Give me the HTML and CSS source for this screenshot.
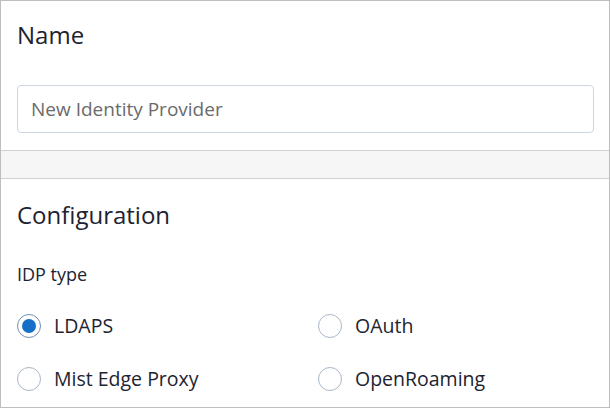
FILE: index.html
```html
<!DOCTYPE html>
<html>
<head>
<meta charset="utf-8">
<link rel="stylesheet" href="styles.css">
</head>
<body>
<div class="panel">
  <section class="sec sec-name">
    <h2 class="title">Name</h2>
    <input class="text-input" type="text" placeholder="New Identity Provider">
  </section>
  <div class="band"></div>
  <section class="sec sec-config">
    <h2 class="title">Configuration</h2>
    <div class="field-label">IDP type</div>
    <div class="radios">
      <label class="radio"><span class="dot checked"></span><span class="radio-text">LDAPS</span></label>
      <label class="radio"><span class="dot"></span><span class="radio-text">OAuth</span></label>
      <label class="radio"><span class="dot"></span><span class="radio-text">Mist Edge Proxy</span></label>
      <label class="radio"><span class="dot"></span><span class="radio-text">OpenRoaming</span></label>
    </div>
  </section>
</div>
</body>
</html>
```
FILE: styles.css
```css
* { box-sizing: border-box; }
html, body { margin: 0; padding: 0; background: #fff; }
body { font-family: "Open Sans", "Noto Sans", sans-serif; color: #1d2330; }
.panel {
  width: 610px;
  height: 408px;
  border: 1px solid #bdbdbd;
  overflow: hidden;
}
.sec { padding: 0 15px 0 16px; }
.sec-name { padding-top: 18px; padding-bottom: 17px; }
.title {
  margin: 0;
  font-size: 24px;
  line-height: 32px;
  font-weight: 400;
  color: #1d2330;
}
.text-input {
  display: block;
  width: 100%;
  height: 48px;
  margin-top: 34px;
  border: 1px solid #cdd6e2;
  border-radius: 4px;
  padding: 0 13px;
  font-family: inherit;
  font-size: 19px;
  color: #333;
  outline: none;
}
.text-input::placeholder { color: #6b6b6b; opacity: 1; }
.band {
  height: 29px;
  background: #f6f6f6;
  border-top: 1px solid #cfcfcf;
  border-bottom: 1px solid #cfcfcf;
}
.sec-config { padding-top: 20px; }
.field-label {
  margin-top: 32px;
  font-size: 18px;
  line-height: 22px;
  color: #1d2330;
}
.radios {
  margin-top: 29px;
  display: grid;
  grid-template-columns: 301px 1fr;
  row-gap: 29px;
}
.radio {
  display: flex;
  align-items: center;
  gap: 13px;
  height: 24px;
}
.dot {
  width: 24px;
  height: 24px;
  border-radius: 50%;
  border: 1px solid #a9b6c6;
  background: #fff;
  display: flex;
  align-items: center;
  justify-content: center;
  flex: none;
}
.dot.checked { border-color: #6f8fb5; }
.dot.checked::after {
  content: "";
  width: 14px;
  height: 14px;
  border-radius: 50%;
  background: #1670c7;
}
.radio-text {
  font-size: 19.5px;
  line-height: 24px;
  color: #1d2330;
}
```
